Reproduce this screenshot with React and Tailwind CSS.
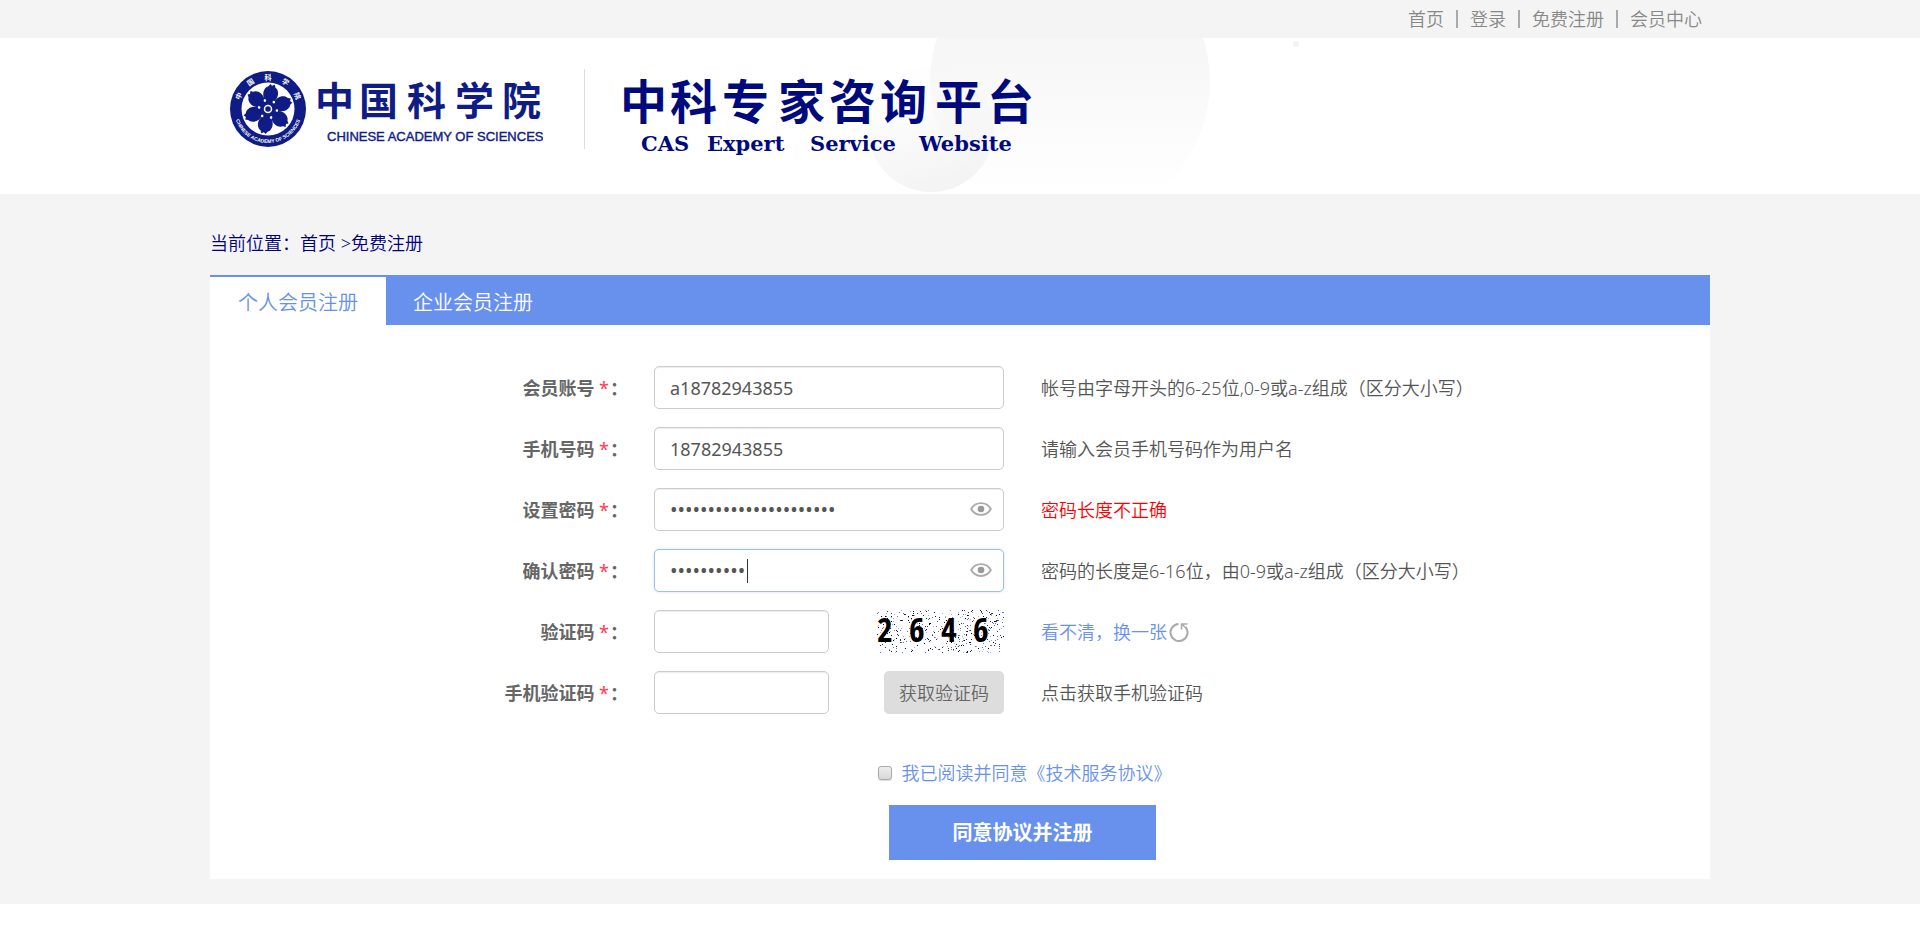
import React, { useState } from "react";

const NAV = ["首页", "登录", "免费注册", "会员中心"];

const PETALS = [0, 60, 120, 180, 240, 300];

function Emblem() {
  return (
    <svg viewBox="0 0 78 78" className="size-[78px] shrink-0" aria-hidden="true">
      <defs>
        <path id="arc-top" d="M9.500 39 A29.500 29.500 0 0 1 68.500 39" />
        <path id="arc-bottom" d="M5 39 A34 34 0 0 0 73 39" />
      </defs>
      <circle cx="39" cy="39" r="38" fill="#0f1c85" />
      <circle cx="39" cy="39" r="26.500" fill="#fff" />
      {PETALS.map((a) => (
        <path
          key={a}
          transform={`rotate(${a + 10} 39 39)`}
          d="M39 39 L35.500 32 C31 27.500 30.500 22 33.500 18 L35.500 16.500 L37 14 L39 15.500 L41.500 14 L42.500 16.500 L44.500 18 C47.500 22 47 27.500 42.500 32 Z"
          fill="#0f1c85"
        />
      ))}
      <circle cx="39" cy="39" r="9" fill="#0f1c85" />
      <circle cx="39" cy="39" r="3.500" fill="none" stroke="#fff" strokeWidth="1.500" />
      {PETALS.map((a) => (
        <circle key={a} cx="39" cy="30" r="1.300" fill="#fff" transform={`rotate(${a + 40} 39 39)`} />
      ))}
      <g fill="#fff" fontSize="7" fontWeight="700" fontFamily="Noto Sans CJK SC, sans-serif" textAnchor="middle">
        {["中", "国", "科", "学", "院"].map((c, i) => (
          <text key={c} x="39" y="9.500" transform={`rotate(${(i - 2) * 33} 39 39)`}>
            {c}
          </text>
        ))}
      </g>
      <text fill="#fff" fontSize="5" fontWeight="700" fontFamily="Liberation Sans, sans-serif">
        <textPath href="#arc-bottom" startOffset="50%" textAnchor="middle">CHINESE ACADEMY OF SCIENCES</textPath>
      </text>
    </svg>
  );
}

function AcademyName() {
  return (
    <svg viewBox="0 0 236 78" className="h-[78px] w-[236px] shrink-0" role="img" aria-label="中国科学院">
      <text
        x="8 52 100 148 195"
        y="45"
        fill="#0f1c85"
        fontSize="39"
        fontWeight="700"
        fontFamily="Noto Sans CJK SC, sans-serif"
      >
        中国科学院
      </text>
      <text
        x="20"
        y="71"
        fill="#0f1c85"
        stroke="#0f1c85"
        strokeWidth="0.400"
        fontSize="13"
        fontFamily="Liberation Sans, sans-serif"
      >
        CHINESE ACADEMY OF SCIENCES
      </text>
    </svg>
  );
}

function PlatformName() {
  return (
    <svg viewBox="0 0 420 96" className="h-[96px] w-[420px] shrink-0" role="img" aria-label="中科专家咨询平台">
      <text
        x="0 50 102 158 209 260 315 367"
        y="54"
        fill="#000a7d"
        fontSize="47"
        fontWeight="700"
        fontFamily="Noto Sans CJK SC, sans-serif"
      >
        中科专家咨询平台
      </text>
      <g fill="#000a7d" fontSize="21" fontWeight="700" fontFamily="DejaVu Serif, serif">
        <text x="21" y="86">CAS</text>
        <text x="87" y="86">Expert</text>
        <text x="190" y="86">Service</text>
        <text x="299" y="86">Website</text>
      </g>
    </svg>
  );
}

function HeaderBackdrop() {
  return (
    <svg
      viewBox="0 0 500 156"
      className="pointer-events-none absolute top-0 left-[640px] h-[156px] w-[500px]"
      aria-hidden="true"
    >
      <defs>
        <linearGradient id="big" x1="0" y1="0" x2="0" y2="156" gradientUnits="userSpaceOnUse">
          <stop offset="0" stopColor="#f6f6f6" />
          <stop offset="1" stopColor="#ffffff" />
        </linearGradient>
        <linearGradient id="small" x1="0.300" y1="0" x2="0.600" y2="1">
          <stop offset="0.200" stopColor="#f3f3f3" stopOpacity="0.100" />
          <stop offset="1" stopColor="#f3f3f3" />
        </linearGradient>
      </defs>
      <circle cx="220" cy="44" r="140" fill="url(#big)" />
      <circle cx="81" cy="91" r="63" fill="url(#small)" />
      <circle cx="446" cy="6" r="3" fill="#f3f3f3" />
    </svg>
  );
}

function EyeIcon() {
  return (
    <svg viewBox="0 0 22 14" className="h-[14px] w-[22px]" fill="none" aria-hidden="true">
      <path
        d="M1.200 7 C5.500 -0.900 16.500 -0.900 20.800 7 C16.500 14.900 5.500 14.900 1.200 7 Z"
        stroke="#aaa"
        strokeWidth="1.900"
      />
      <circle cx="11" cy="7" r="3.300" fill="#999" />
    </svg>
  );
}

function RefreshIcon() {
  return (
    <svg viewBox="0 0 20 20" className="size-5" fill="none" stroke="#aaa" strokeWidth="2" aria-hidden="true">
      <path d="M9.500 2 A8.500 8.500 0 1 0 16.500 5" />
      <path d="M12.500 7.500 V2 H18.500 M12.500 2 L16.500 5.500" strokeWidth="1.600" />
    </svg>
  );
}

function makeSpecks(count) {
  let seed = 2646;
  const next = () => {
    seed = (seed * 16807) % 2147483647;
    return seed / 2147483647;
  };
  return Array.from({ length: count }, () => ({
    x: Math.floor(next() * 128),
    y: Math.floor(next() * 43),
    c: ["#00008b", "#6666dd", "#333366", "#aaaadd"][Math.floor(next() * 4)],
  }));
}

const SPECKS = makeSpecks(420);

function Captcha() {
  return (
    <svg viewBox="0 0 128 43" className="h-[43px] w-[128px]" role="img" aria-label="2646">
      {SPECKS.map((s, i) => (
        <rect key={i} x={s.x} y={s.y} width="1" height="1" fill={s.c} />
      ))}
      <text
        x="1 33 65 97"
        y="32"
        fontSize="34"
        fontWeight="700"
        fontFamily="Liberation Sans Narrow, Open Sans Condensed, Liberation Sans, sans-serif"
      >
        2646
      </text>
    </svg>
  );
}

const inputBase =
  "h-[43px] rounded-[5px] border border-[#ccc] bg-white px-[15px] font-normal text-[#555] shadow-[inset_0_1px_1px_rgba(0,0,0,0.075)] outline-none";

function Row({ id, label, hint, hintClass = "text-[#555]", children }) {
  return (
    <div className="grid grid-cols-[minmax(150px,418px)_350px_1fr] items-center gap-x-[26px]">
      <label htmlFor={id} className="text-right font-bold text-[#666]">
        {label} <span className="pr-px font-normal text-[#ff3b4e]">*</span>：
      </label>
      <div className="flex items-center justify-between">{children}</div>
      <div className={`pl-[11px] ${hintClass}`}>{hint}</div>
    </div>
  );
}

function PasswordField({ id, initial, active }) {
  const [shown, setShown] = useState(false);
  return (
    <div className="relative w-full">
      <input
        id={id}
        type={shown ? "text" : "password"}
        defaultValue={initial}
        className={
          active
            ? "h-[43px] w-full rounded-[5px] border border-[#a3bfdd] bg-white px-[15px] text-[20px] leading-normal font-normal text-[#555] caret-transparent shadow-[0_0_3px_rgba(104,145,237,0.3)] outline-none"
            : `${inputBase} w-full text-[20px] leading-normal`
        }
      />
      {active && <span className="absolute top-[10px] left-[93px] h-6 w-px bg-[#333]" />}
      <button
        type="button"
        aria-label="显示密码"
        onClick={() => setShown(!shown)}
        className="absolute top-[14px] right-3"
      >
        <EyeIcon />
      </button>
    </div>
  );
}

export default function App() {
  return (
    <div className="bg-white font-['Noto_Sans','Noto_Sans_CJK_SC',sans-serif] text-[18px] leading-6 font-[350]">
      <nav className="bg-[#f4f4f4]">
        <ul className="mx-auto flex h-[38px] max-w-[1500px] items-center justify-end pr-2 text-[#888]">
          {NAV.map((t, i) => (
            <li key={t} className="flex items-center">
              {i > 0 && <span className="mx-3 h-[18px] w-[2px] bg-[#aaa]" />}
              <a href="#">{t}</a>
            </li>
          ))}
        </ul>
      </nav>

      <header className="relative mx-auto flex h-[156px] max-w-[1500px] items-start pl-[19px]">
        <HeaderBackdrop />
        <a href="#" className="relative mt-8 flex">
          <Emblem />
          <AcademyName />
        </a>
        <div className="mt-[31px] ml-[41px] h-20 w-px bg-[#ddd]" />
        <a href="#" className="relative mt-[27px] ml-[35px]">
          <PlatformName />
        </a>
      </header>

      <main className="bg-[#f4f4f4] pb-[25px]">
        <div className="mx-auto max-w-[1500px]">
          <p className="pt-[37px] pb-5 text-[#00007d]">
            当前位置：<a href="#">首页</a> &gt;<a href="#">免费注册</a>
          </p>
          <section className="bg-white pb-[19px]">
            <div className="flex h-[50px] bg-[#6891ed] text-[20px]">
              <button type="button" className="border-t-2 border-[#6891ed] bg-white px-7 pt-1 text-[#6891ed]">
                个人会员注册
              </button>
              <button type="button" className="border-t-2 border-[#6891ed] px-[27px] pt-1 text-white">
                企业会员注册
              </button>
            </div>

            <form onSubmit={(e) => e.preventDefault()}>
              <div className="flex flex-col gap-[18px] pt-[41px]">
                <Row id="account" label="会员账号" hint="帐号由字母开头的6-25位,0-9或a-z组成（区分大小写）">
                  <input id="account" type="text" defaultValue="a18782943855" className={`${inputBase} w-full`} />
                </Row>
                <Row id="phone" label="手机号码" hint="请输入会员手机号码作为用户名">
                  <input id="phone" type="text" defaultValue="18782943855" className={`${inputBase} w-full`} />
                </Row>
                <Row id="password" label="设置密码" hint="密码长度不正确" hintClass="text-[#ff0000]">
                  <PasswordField id="password" initial="a187829438551234567890" />
                </Row>
                <Row id="confirm" label="确认密码" hint="密码的长度是6-16位，由0-9或a-z组成（区分大小写）">
                  <PasswordField id="confirm" initial="a187829438" active />
                </Row>
                <Row
                  id="captcha"
                  label="验证码"
                  hint={
                    <a href="#" className="flex items-center gap-[2px] text-[#6891ed]">
                      看不清，换一张
                      <RefreshIcon />
                    </a>
                  }
                >
                  <input id="captcha" type="text" className={`${inputBase} w-[175px]`} />
                  <Captcha />
                </Row>
                <Row id="sms" label="手机验证码" hint="点击获取手机验证码">
                  <input id="sms" type="text" className={`${inputBase} w-[175px]`} />
                  <button type="button" className="h-[43px] w-[120px] rounded-[5px] bg-[#ddd] text-[#666]">
                    获取验证码
                  </button>
                </Row>
              </div>

              <div className="mt-[47px] flex items-center justify-center pl-[129px]">
                <input
                  id="agree"
                  type="checkbox"
                  className="size-[14px] appearance-none rounded-[3px] border border-[#aaa] bg-linear-to-b from-[#eee] to-[#d8d8d8] shadow-[0_1px_1px_rgba(0,0,0,0.15)] checked:bg-[#6891ed]"
                />
                <label htmlFor="agree" className="pl-[10px] text-[#6891ed]">
                  我已阅读并同意《技术服务协议》
                </label>
              </div>
              <div className="mt-5 flex justify-center pl-[125px]">
                <button type="submit" className="h-[55px] w-[267px] bg-[#6891ed] text-[20px] font-bold text-white">
                  同意协议并注册
                </button>
              </div>
            </form>
          </section>
        </div>
      </main>
    </div>
  );
}
